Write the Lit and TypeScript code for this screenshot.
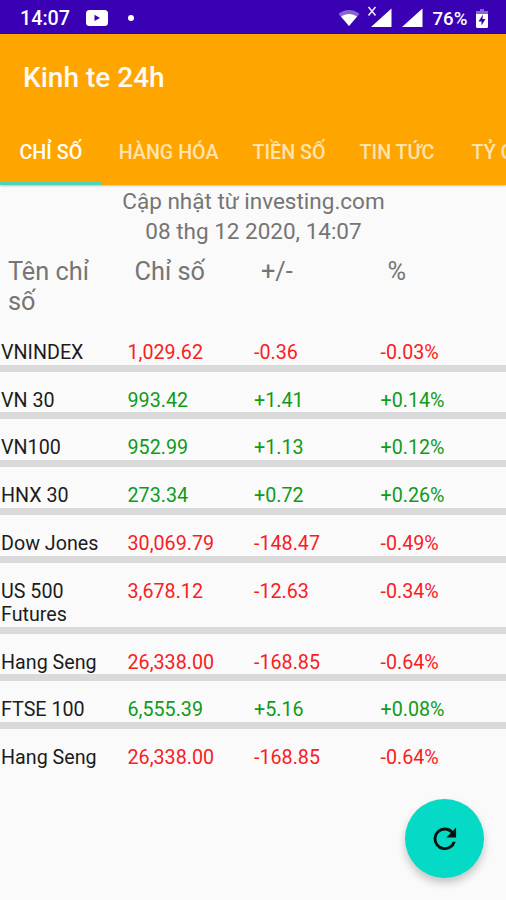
import { LitElement, html, css, svg } from "lit";
import { customElement, state } from "lit/decorators.js";
import { classMap } from "lit/directives/class-map.js";

interface Quote {
  name: string;
  value: string;
  change: string;
  percent: string;
}

const QUOTES: Quote[] = [
  { name: "VNINDEX", value: "1,029.62", change: "-0.36", percent: "-0.03%" },
  { name: "VN 30", value: "993.42", change: "+1.41", percent: "+0.14%" },
  { name: "VN100", value: "952.99", change: "+1.13", percent: "+0.12%" },
  { name: "HNX 30", value: "273.34", change: "+0.72", percent: "+0.26%" },
  { name: "Dow Jones", value: "30,069.79", change: "-148.47", percent: "-0.49%" },
  { name: "US 500 Futures", value: "3,678.12", change: "-12.63", percent: "-0.34%" },
  { name: "Hang Seng", value: "26,338.00", change: "-168.85", percent: "-0.64%" },
  { name: "FTSE 100", value: "6,555.39", change: "+5.16", percent: "+0.08%" },
  { name: "Hang Seng", value: "26,338.00", change: "-168.85", percent: "-0.64%" },
];

@customElement("status-bar")
class StatusBar extends LitElement {
  static styles = css`
    :host {
      display: flex;
      align-items: center;
      flex: none;
      height: 34px;
      box-sizing: border-box;
      padding: 2px 18.5px 0 20px;
      background: #3a00b4;
      color: #fff;
      font-size: 19.7px;
      font-weight: 500;
      line-height: 32px;
      white-space: nowrap;
    }
    svg { display: block; flex: none; }
    .time { width: 66px; padding-top: 2px; }
    .dot { width: 6px; height: 6px; border-radius: 50%; background: #fff; margin-left: 20px; }
    .space { flex: 1; }
    .sim { margin-left: 3px; }
    .sim2 { margin-left: 9px; }
    .battery { width: 39px; margin-left: 10px; padding-top: 2px; font-size: 18.6px; }
    .cell { margin-left: 4px; }
  `;
  render() {
    return html`
      <span class="time">14:07</span>
      <svg width="22" height="16" viewBox="0 0 22 16">
        <rect width="22" height="16" rx="3.5" fill="#fff" />
        <path d="M8.5 4.8v6.2l5.5-3.1z" fill="#3a00b4" />
      </svg>
      <span class="dot"></span>
      <span class="space"></span>
      <svg width="22" height="18" viewBox="0 0 22 18">
        <path d="M11 17 0.5 5C6.5-.2 15.5-.2 21.5 5z" fill="#fff" opacity="0.4" />
        <path d="M11 17 3 7.5C7.7 4 14.3 4 19 7.5z" fill="#fff" />
      </svg>
      <svg class="sim" width="30" height="24" viewBox="0 0 30 24">
        <path d="M5.5 1l7 8.5M12.500 1l-7 8.500" stroke="#fff" stroke-width="1.6" fill="none" opacity="0.9" />
        <path d="M28.500 2.500v18.500h-20.500z" fill="#fff" />
      </svg>
      <svg class="sim2" width="21" height="20" viewBox="0 0 21 20">
        <path d="M20.500 0.500v18.500H0z" fill="#fff" />
      </svg>
      <span class="battery">76%</span>
      <svg class="cell" width="12" height="19" viewBox="0 0 12 19">
        <path d="M4 0h4v2h4v4H0V2h4z" fill="#fff" opacity="0.4" />
        <path d="M0 5h12v12.500a1.500 1.500 0 0 1-1.500 1.500h-9A1.500 1.500 0 0 1 0 17.500z" fill="#fff" />
        <path d="M7 5.500 2.500 12.500h3v4L9.500 10h-3z" fill="#3a00b4" />
      </svg>
    `;
  }
}

@customElement("quote-row")
class QuoteRow extends LitElement {
  static properties = { quote: { attribute: false } };
  declare quote: Quote;
  static styles = css`
    :host {
      display: grid;
      grid-template-columns: repeat(4, 126.5px);
      padding: 17px 0 0.7px;
      font-size: 19.7px;
      line-height: 23.1px;
      color: #1c1c1c;
    }
    .name { padding-right: 20px; }
    .up { color: #109a18; }
    .down { color: #f8201f; }
  `;
  render() {
    const q = this.quote;
    const down = q.change.startsWith("-");
    const tone = classMap({ up: !down, down });
    return html`
      <span class="name">${q.name}</span>
      <span class=${tone}>${q.value}</span>
      <span class=${tone}>${q.change}</span>
      <span class=${tone}>${q.percent}</span>
    `;
  }
}

@customElement("app-root")
class AppRoot extends LitElement {
  @state() private active = 0;

  private tabs = ["CHỈ SỐ", "HÀNG HÓA", "TIỀN SỐ", "TIN TỨC", "TỶ GIÁ"];

  static styles = css`
    :host {
      display: flex;
      flex-direction: column;
      position: relative;
      width: 506px;
      height: 900px;
      overflow: hidden;
      background: #fafafa;
      font-family: Roboto, "Noto Sans", sans-serif;
    }
    .appbar {
      height: 150.5px;
      flex: none;
      display: flex;
      flex-direction: column;
      background: #ffa500;
      box-shadow: 0 1px 2px rgba(0, 0, 0, 0.24);
    }
    .title {
      margin: 0;
      padding-left: 23px;
      height: 84px;
      line-height: 87px;
      font-size: 28px;
      font-weight: 500;
      color: #fff;
      opacity: 0.95;
    }
    .tabs { display: flex; height: 66.5px; }
    .tab {
      flex: none;
      box-sizing: border-box;
      min-width: 101.7px;
      padding: 0 17px;
      border-bottom: 3px solid transparent;
      font-size: 19.7px;
      font-weight: 500;
      line-height: 69px;
      height: 66.5px;
      text-align: center;
      color: #ffe3ae;
      white-space: nowrap;
    }
    .tab.active { color: #fff; border-color: #50d3b4; }
    .updated {
      padding: 1.5px 0 0 1px;
      text-align: center;
      font-size: 22.5px;
      line-height: 30px;
      color: #757575;
    }
    .head {
      display: grid;
      grid-template-columns: repeat(4, 126.5px);
      height: 77.9px;
      padding-top: 11px;
      box-sizing: border-box;
      font-size: 25.3px;
      line-height: 30px;
      color: #757575;
    }
    .head span { padding: 0 24px 0 8px; }
    .divider { height: 7px; background: #dadada; }
    .list { padding-left: 1px; }
    .fab {
      position: absolute;
      left: 405px;
      top: 799px;
      width: 79px;
      height: 79px;
      border: 0;
      padding: 0;
      border-radius: 50%;
      background: #04dac5;
      display: grid;
      place-items: center;
      box-shadow: 0 5px 9px rgba(0, 0, 0, 0.22);
    }
    .fab svg { display: block; }
  `;

  private refreshIcon() {
    return svg`<path d="M17.65 6.35A7.958 7.958 0 0 0 12 4a8 8 0 1 0 7.73 10h-2.08A6 6 0 1 1 12 6c1.66 0 3.14.69 4.22 1.78L13 11h7V4z" fill="#06110f" />`;
  }

  render() {
    return html`
      <status-bar></status-bar>
      <header class="appbar">
        <h1 class="title">Kinh te 24h</h1>
        <nav class="tabs">
          ${this.tabs.map(
            (t, i) => html`<span
              class=${classMap({ tab: true, active: i === this.active })}
              @click=${() => (this.active = i)}
              >${t}</span
            >`
          )}
        </nav>
      </header>
      <div class="updated">Cập nhật từ investing.com<br />08 thg 12 2020, 14:07</div>
      <div class="head"><span>Tên chỉ số</span><span>Chỉ số</span><span>+/-</span><span>%</span></div>
      ${QUOTES.map(
        (q, i) => html`
          ${i ? html`<div class="divider"></div>` : ""}
          <quote-row class="list" .quote=${q}></quote-row>
        `
      )}
      <button class="fab" aria-label="Refresh">
        <svg width="33.7" height="33.7" viewBox="0 0 24 24">${this.refreshIcon()}</svg>
      </button>
    `;
  }
}
